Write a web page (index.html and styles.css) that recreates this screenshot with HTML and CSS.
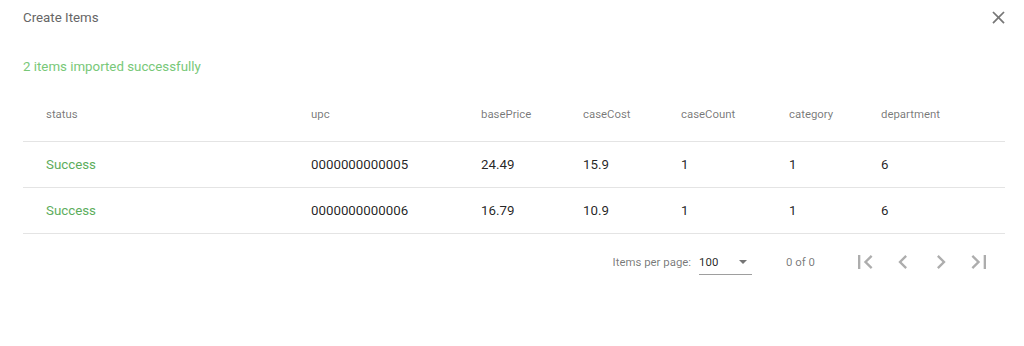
FILE: index.html
```html
<!DOCTYPE html>
<html>
<head>
<meta charset="utf-8">
<link rel="stylesheet" href="styles.css">
</head>
<body>
<div class="dialog">
  <div class="title-row">
    <h2 class="title">Create Items</h2>
    <button class="close" aria-label="close">
      <svg viewBox="0 0 24 24" width="21" height="21"><path d="M19 6.41L17.59 5 12 10.59 6.41 5 5 6.41 10.59 12 5 17.59 6.41 19 12 13.41 17.59 19 19 17.59 13.41 12z" fill="currentColor"/></svg>
    </button>
  </div>
  <div class="message">2 items imported successfully</div>
  <table class="grid">
    <colgroup>
      <col class="c1"><col class="c2"><col class="c3"><col class="c4"><col class="c5"><col class="c6"><col class="c7">
    </colgroup>
    <thead>
      <tr>
        <th class="first">status</th><th>upc</th><th>basePrice</th><th>caseCost</th><th>caseCount</th><th>category</th><th>department</th>
      </tr>
    </thead>
    <tbody>
      <tr>
        <td class="first ok">Success</td><td>0000000000005</td><td>24.49</td><td>15.9</td><td>1</td><td>1</td><td>6</td>
      </tr>
      <tr>
        <td class="first ok">Success</td><td>0000000000006</td><td>16.79</td><td>10.9</td><td>1</td><td>1</td><td>6</td>
      </tr>
    </tbody>
  </table>
  <div class="paginator">
    <span class="pp-label">Items per page:</span>
    <div class="select">
      <span class="select-value">100</span>
      <span class="select-arrow"></span>
    </div>
    <span class="range">0 of 0</span>
    <button class="nav"><svg viewBox="0 0 24 24" width="28" height="28"><path d="M18.41 16.59L13.82 12l4.59-4.59L17 6l-6 6 6 6zM6 6h2v12H6z" fill="currentColor"/></svg></button>
    <button class="nav"><svg viewBox="0 0 24 24" width="28" height="28"><path d="M15.41 7.41L14 6l-6 6 6 6 1.410-1.41L10.83 12z" fill="currentColor"/></svg></button>
    <button class="nav"><svg viewBox="0 0 24 24" width="28" height="28"><path d="M10 6L8.59 7.41 13.17 12l-4.58 4.59L10 18l6-6z" fill="currentColor"/></svg></button>
    <button class="nav"><svg viewBox="0 0 24 24" width="28" height="28"><path d="M5.59 7.41L10.18 12l-4.59 4.59L7 18l6-6-6-6zM16 6h2v12h-2z" fill="currentColor"/></svg></button>
  </div>
</div>
</body>
</html>
```
FILE: styles.css
```css
* { box-sizing: border-box; }
html, body { margin: 0; background: #fff; }
body { font-family: Roboto, "Liberation Sans", sans-serif; color: rgba(0,0,0,.87); }

.dialog { padding: 0 19px 0 23px; }

.title-row {
  display: flex;
  align-items: center;
  justify-content: space-between;
  height: 35px;
}
.title {
  margin: 0;
  font-size: 13.3px;
  font-weight: 400;
  color: #666;
}
.close {
  border: 0;
  background: none;
  padding: 0;
  margin-right: -6px;
  width: 26px;
  height: 26px;
  display: flex;
  align-items: center;
  justify-content: center;
  color: #777;
}

.message {
  margin-top: 21px;
  height: 22px;
  line-height: 22px;
  font-size: 13.3px;
  color: #78c878;
}

.grid {
  margin-top: 7px;
  width: 982px;
  border-collapse: collapse;
  table-layout: fixed;
}
.c1 { width: 288px; }
.c2 { width: 170px; }
.c3 { width: 102px; }
.c4 { width: 98px; }
.c5 { width: 108px; }
.c6 { width: 92px; }
.c7 { width: 124px; }

.grid th {
  height: 56px;
  padding: 2px 0 0;
  font-size: 11.4px;
  font-weight: 400;
  color: rgba(0,0,0,.54);
  text-align: left;
  border-bottom: 1px solid #e4e4e4;
}
.grid td {
  height: 46px;
  font-size: 13.3px;
  padding: 0;
  border-bottom: 1px solid #e4e4e4;
}
.grid .first { padding-left: 23px; }
.grid .ok { color: #5cad5c; }

.paginator {
  display: flex;
  align-items: center;
  justify-content: flex-end;
  height: 56px;
  width: 982px;
  padding-right: 7px;
  font-size: 11.4px;
  color: rgba(0,0,0,.54);
}
.pp-label { margin-right: 8px; }
.select {
  width: 53px;
  height: 24px;
  display: flex;
  align-items: center;
  justify-content: space-between;
  border-bottom: 1px solid #9e9e9e;
  margin-top: 2px;
  color: rgba(0,0,0,.87);
  font-size: 11.4px;
}
.select-arrow {
  width: 0;
  height: 0;
  border-left: 4px solid transparent;
  border-right: 4px solid transparent;
  border-top: 4px solid #757575;
  margin-right: 5px;
}
.range { margin: 0 31px 0 34px; }
.nav {
  width: 38px;
  height: 40px;
  border: 0;
  background: none;
  padding: 0;
  display: flex;
  align-items: center;
  justify-content: center;
  color: rgba(0,0,0,.32);
}
```
